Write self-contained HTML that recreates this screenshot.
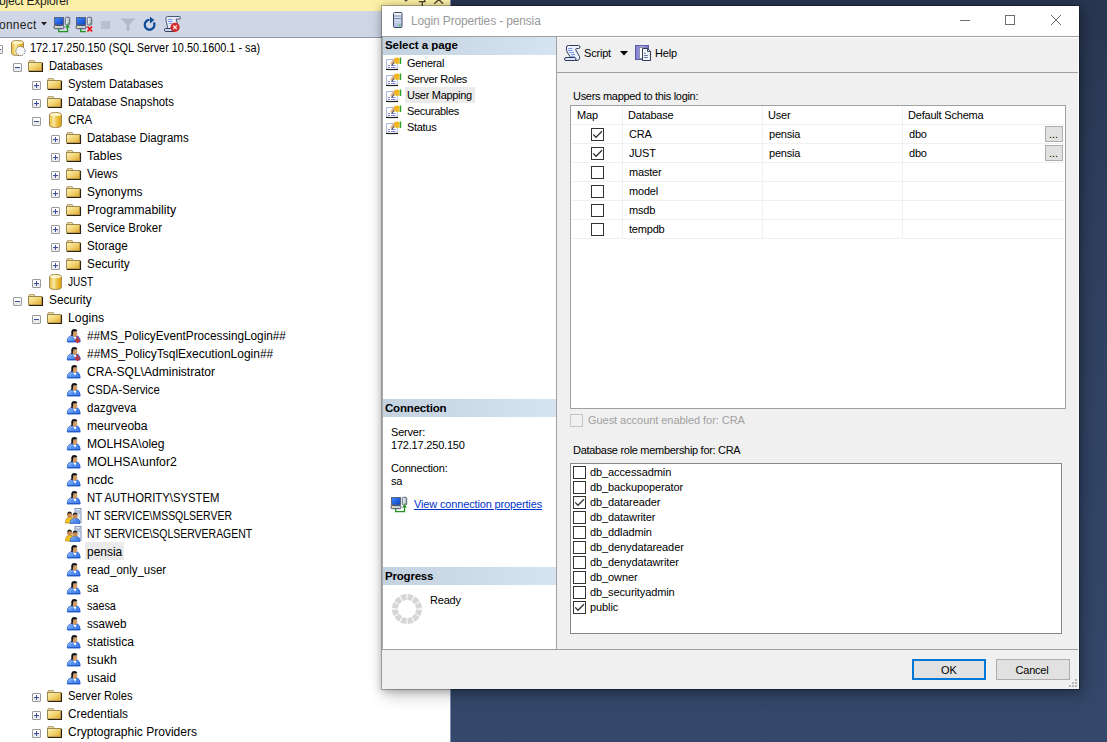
<!DOCTYPE html>
<html><head><meta charset="utf-8">
<style>
*{margin:0;padding:0;box-sizing:border-box}
html,body{width:1107px;height:742px;overflow:hidden}
body{position:relative;font-family:"Liberation Sans",sans-serif;background:linear-gradient(#293651 0%,#2f405f 35%,#34486b 100%);color:#000}
.abs{position:absolute}
#oe{position:absolute;left:0;top:0;width:450px;height:742px;background:#fff;overflow:hidden}
#oe-title{position:absolute;left:0;top:0;width:450px;height:11px;background:#fdf0a6;overflow:hidden}
#oe-tb{position:absolute;left:0;top:11px;width:450px;height:26px;background:#cfd6e5}
#oe-tbline{position:absolute;left:0;top:37px;width:450px;height:1px;background:#8e98ad}
#oe-edge{position:absolute;left:450px;top:0;width:1px;height:742px;background:#7d8fb8}
.tt{position:absolute;height:18px;line-height:18px;font-size:12px;white-space:nowrap;color:#000}
.tt span{display:inline-block;transform-origin:0 0;position:relative;top:1px}
.tt.hl{background:#ebebeb;padding:0 2px;margin-left:-2px}
.exp{position:absolute;width:9px;height:9px;border:1px solid #9b9b9b;border-radius:1px;background:linear-gradient(#fff 0%,#fff 45%,#e4e4e4 55%,#f0f0f0 100%)}
.exp .h{position:absolute;left:1px;top:3px;width:5px;height:1px;background:#3a4fa0}
.exp .v{position:absolute;left:3px;top:1px;width:1px;height:5px;background:#3a4fa0}
.ic{position:absolute;overflow:visible}
/* dialog */
#dlg{position:absolute;left:381px;top:5px;width:699px;height:685px;background:#f0f0f0;border:1px solid rgba(0,0,0,.25);background-clip:padding-box;box-shadow:0 1px 7px rgba(0,0,0,.22),3px 5px 15px rgba(0,0,0,.24)}
.d{position:absolute;font-size:11px;line-height:13px;white-space:nowrap;letter-spacing:-0.2px;color:#000}
.b{font-weight:bold;letter-spacing:-0.05px;font-size:11.5px}
.hdr{position:absolute;height:18px;background:linear-gradient(90deg,#c4d2e0,#d6e3f0)}
.cb{position:absolute;width:13px;height:13px;border:1px solid #333;background:#fff}
.gl{position:absolute;background:#f0f0f0}
</style></head>
<body>
<svg width="0" height="0" style="position:absolute">
<defs>
<linearGradient id="gfold" x1="0" y1="0" x2="1" y2="1"><stop offset="0" stop-color="#fdf3b8"/><stop offset="0.55" stop-color="#f0cf6a"/><stop offset="1" stop-color="#dfa12a"/></linearGradient>
<linearGradient id="gdb" x1="0" y1="0" x2="1" y2="0"><stop offset="0" stop-color="#e9b832"/><stop offset="0.35" stop-color="#f7e9a6"/><stop offset="0.6" stop-color="#eec24c"/><stop offset="1" stop-color="#dd9f08"/></linearGradient>
<linearGradient id="gblue" x1="0" y1="0" x2="1" y2="0.6"><stop offset="0" stop-color="#c4e2ff"/><stop offset="0.45" stop-color="#5d97f2"/><stop offset="1" stop-color="#3a78e6"/></linearGradient>
<symbol id="folder" viewBox="0 0 16 13">
 <path d="M0.8 2.8L1.3 0.6H6.2L7.2 2.8z" fill="#f3e3a6" stroke="#a89464" stroke-width="0.9"/>
 <rect x="0.5" y="2.5" width="13.5" height="8.5" fill="url(#gfold)" stroke="#9b8650" stroke-width="1"/>
 <path d="M14.5 3v8.5H1" stroke="#2c2410" stroke-width="1.1" fill="none"/>
</symbol>
<symbol id="db" viewBox="0 0 13 16">
 <path d="M0.5 2.5 Q0.5 0.5 6.5 0.5 Q12.5 0.5 12.5 2.5 V13.5 Q12.5 15.5 6.5 15.5 Q0.5 15.5 0.5 13.5z" fill="url(#gdb)" stroke="#a48b55" stroke-width="1"/>
 <ellipse cx="6.5" cy="2.6" rx="5.5" ry="1.6" fill="#fdf6c8"/>
</symbol>
<symbol id="server" viewBox="0 0 16 17">
 <path d="M0.5 2.5 Q0.5 0.5 6.5 0.5 Q12.5 0.5 12.5 2.5 V13.5 Q12.5 15.5 6.5 15.5 Q0.5 15.5 0.5 13.5z" fill="url(#gdb)" stroke="#a48b55" stroke-width="1"/>
 <ellipse cx="6.5" cy="2.6" rx="5.5" ry="1.6" fill="#fdf6c8"/>
 <circle cx="9.5" cy="11" r="4.6" fill="#f7f7f7" stroke="#555" stroke-width="0.9" stroke-dasharray="1.2 1"/>
</symbol>
<symbol id="user" viewBox="0 0 16 16">
 <path d="M1.2 14 Q1 9 4.5 7.8 L11 7.8 Q14.3 9 14.2 14z" fill="url(#gblue)" stroke="#2d63d2" stroke-width="0.8"/>
 <path d="M2 13.6h12" stroke="#1f56c8" stroke-width="1"/>
 <path d="M7 8.5 L9.3 11.8 L10.3 9z" fill="#fff"/>
 <ellipse cx="8.7" cy="5.8" rx="2.6" ry="2.9" fill="#d19b68"/>
 <path d="M5.3 8 L5.3 3.2 Q5.8 1 8.5 1 Q11.2 1 11.3 3.6 Q9.6 2.8 7.3 3.6 L6.6 8.2z" fill="#111"/>
</symbol>
<symbol id="redarrow" viewBox="0 0 16 16">
 <path d="M10.5 8.5h2v3h2.5l-3.5 4-3.5-4h2.5z" fill="#c83232"/>
</symbol>
<symbol id="service" viewBox="0 0 17 16">
 <rect x="10" y="0.5" width="6" height="14" fill="#dfe6f3" stroke="#6a7fa8" stroke-width="0.8"/>
 <path d="M11 3h4M11 5h4" stroke="#7a8fb8" stroke-width="0.8"/>
 <path d="M0.5 15 Q0.5 10 3.5 9.5 L7 9.5 Q9 10 9 15z" fill="#f2c21a" stroke="#b8860b" stroke-width="0.7"/>
 <circle cx="4.5" cy="7" r="2.5" fill="#c98b55"/>
 <path d="M2 6.5 Q2.5 3.5 4.6 3.5 Q7 3.5 7 6 Q5.5 5 3.5 5.5z" fill="#1c1c1c"/>
 <path d="M5 15.5 Q5 11 8.5 10.5 L12 10.5 Q15 11 15 15.5z" fill="url(#gblue)" stroke="#2a5fc0" stroke-width="0.7"/>
 <circle cx="10" cy="8" r="2.6" fill="#c98b55"/>
 <path d="M7.5 7.5 Q8 4.5 10.1 4.5 Q12.5 4.5 12.5 7 Q11 6 9 6.5z" fill="#1c1c1c"/>
</symbol>
<symbol id="pageic" viewBox="0 0 16 16">
 <path d="M0.5 13.5V3.5h11v10" fill="#fff" stroke="#b4b4e8" stroke-width="1"/>
 <path d="M11 4v9.5" stroke="#cfe8f8" stroke-width="1"/>
 <path d="M0 13.5h12" stroke="#1e1e1e" stroke-width="1.2"/>
 <path d="M2 9.5h2M5 9.5h4.5M2 11.5h2M5 11.5h4.5" stroke="#7f7fd6" stroke-width="1"/>
 <path d="M4 7.5l3-4 2 0 -2.5 5z" fill="#e0a878" opacity="0.8"/>
 <path d="M6 9l4-5" stroke="#33332a" stroke-width="1.6" stroke-dasharray="1 0.6"/>
 <path d="M8 2.5q2-1.5 5.5-0.5v5.5q-3 1-5-0.5z" fill="#f5b820"/>
 <path d="M14.5 1.5v6.5" stroke="#27a027" stroke-width="1.4"/>
</symbol>
<symbol id="connic" viewBox="0 0 17 16">
 <rect x="0.5" y="1.5" width="10" height="8" fill="#2f7de0" stroke="#4a5a78" stroke-width="0.9"/>
 <rect x="2" y="3" width="7" height="5" fill="#5db0ff"/>
 <rect x="0.5" y="10" width="10" height="3" rx="1" fill="#cfd8e8" stroke="#4a5a78" stroke-width="0.8"/>
 <rect x="12" y="0.5" width="4" height="10" rx="1" fill="#e8eef8" stroke="#4a5a78" stroke-width="0.8"/>
 <path d="M5 13v2.5h9v-4" stroke="#1f9a1f" stroke-width="1.3" fill="none"/>
 <path d="M12 12l2-2.5 2 2.5z" fill="#1f9a1f"/>
</symbol>
</defs>
</svg>

<div id="oe">
 <div id="oe-title">
  <div class="abs" style="left:-1px;top:-5px;font-size:12px;line-height:13px;color:#1e1e1e;white-space:nowrap;letter-spacing:-0.2px">bject Explorer</div>
  <svg class="abs" style="left:400px;top:-4px" width="50" height="15"><path d="M3.5 3.5h5l-2.5 2.2z" fill="#4a4430"/><path d="M22.3 5v5M18.8 5.6h7M20 0.5h4.6v5" stroke="#4a4430" stroke-width="1.3" fill="none"/><path d="M34.3 -0.5l8.8 8.2M43.1 -0.5l-8.8 8.2" stroke="#4a4430" stroke-width="1.4"/></svg>
 </div>
 <div id="oe-tb">
  <div class="abs" style="left:-1px;top:7px;font-size:12px;line-height:14px;color:#1e1e1e;letter-spacing:0.25px">onnect</div>
  <svg class="abs" style="left:41px;top:11px" width="6" height="4"><path d="M0 0h6l-3 3.5z" fill="#1e1e1e"/></svg>
  <svg class="abs" style="left:50px;top:1px" width="46" height="24">
   <defs><linearGradient id="gscr" x1="0" y1="0" x2="1" y2="1"><stop offset="0" stop-color="#3f8cff"/><stop offset="1" stop-color="#0b3fc4"/></linearGradient>
   <linearGradient id="gtow" x1="0" y1="0" x2="1" y2="0"><stop offset="0" stop-color="#f4f6fa"/><stop offset="1" stop-color="#a9b3c6"/></linearGradient></defs>
   <g id="mon">
    <rect x="4.5" y="5.5" width="9" height="7.5" fill="url(#gscr)" stroke="#5a6478" stroke-width="1"/>
    <rect x="4" y="13.5" width="10" height="3.2" rx="1.2" fill="#c6cfdc" stroke="#3e4658" stroke-width="0.9"/>
    <rect x="5" y="14.4" width="2.5" height="1.2" fill="#e9f08a"/>
    <rect x="15.3" y="5.3" width="4.4" height="7.6" rx="1" fill="url(#gtow)" stroke="#4e586c" stroke-width="0.9"/>
    <rect x="17.6" y="11" width="1.2" height="1.2" fill="#3cb030"/>
   </g>
   <path d="M8.7 17v2.6h8.8v-5" stroke="#1f941f" stroke-width="1.3" fill="none"/>
   <path d="M15 15.5l2.5-3 2.5 3z" fill="#1f941f"/>
   <use href="#mon" x="22"/>
   <path d="M30.7 17v2.6h5" stroke="#1f941f" stroke-width="1.3" fill="none"/>
   <path d="M37.5 14.5l4.5 5M42 14.5l-4.5 5" stroke="#f01010" stroke-width="1.8"/>
  </svg>
  <div class="abs" style="left:101px;top:10px;width:9px;height:8px;background:#b9bfcb"></div>
  <svg class="abs" style="left:120px;top:7px" width="16" height="13"><path d="M0.5 0.5h15l-6 6v6h-3v-6z" fill="#b3b9c6"/></svg>
  <svg class="abs" style="left:138px;top:1px" width="46" height="24">
   <path d="M15.9 10.5A4.9 4.9 0 1 1 11.5 7.9" stroke="#0c4a98" stroke-width="2.3" fill="none"/>
   <path d="M12 4.8l4.3 3.2-4.3 3.4z" fill="#0c4a98"/>
   <path d="M31 4.5h10q1.5 0 1.5 1.3t-1.5 1.3h-3l0 0L41 17H30l-1.5-6.5q-0.5-1.5-0.5-3V6q0-1.5 1.5-1.5z" fill="#e6ecf8" stroke="#3a4766" stroke-width="0.9"/>
   <path d="M26.5 17.5q0-1 1-1h9v3h-9q-1 0-1-2z" fill="#cbd7f0" stroke="#24304c" stroke-width="0.9"/>
   <path d="M30 7.5h4.5M30 9.5h4.5M31 11.5h3" stroke="#6e8fe0" stroke-width="0.9"/>
   <circle cx="37" cy="15.3" r="4.6" fill="#d42a2a"/>
   <path d="M35.2 13.5l3.6 3.6M38.8 13.5l-3.6 3.6" stroke="#fbeaea" stroke-width="1.3"/>
  </svg>
 </div>
 <div id="oe-tbline"></div>
<div class="exp" style="left:-6px;top:45px"><i class="h"></i></div>
<svg class="ic" style="left:11px;top:40px" width="16" height="17"><use href="#server"/></svg>
<div class="tt" style="left:30px;top:38px"><span style="transform:scaleX(0.9072)">172.17.250.150 (SQL Server 10.50.1600.1 - sa)</span></div>
<div class="exp" style="left:13px;top:63px"><i class="h"></i></div>
<svg class="ic" style="left:28px;top:60px" width="16" height="13"><use href="#folder"/></svg>
<div class="tt" style="left:49px;top:56px"><span style="transform:scaleX(0.9359)">Databases</span></div>
<div class="exp" style="left:32px;top:81px"><i class="h"></i><i class=v></i></div>
<svg class="ic" style="left:47px;top:78px" width="16" height="13"><use href="#folder"/></svg>
<div class="tt" style="left:68px;top:74px"><span style="transform:scaleX(0.9452)">System Databases</span></div>
<div class="exp" style="left:32px;top:99px"><i class="h"></i><i class=v></i></div>
<svg class="ic" style="left:47px;top:96px" width="16" height="13"><use href="#folder"/></svg>
<div class="tt" style="left:68px;top:92px"><span style="transform:scaleX(0.9513)">Database Snapshots</span></div>
<div class="exp" style="left:32px;top:117px"><i class="h"></i></div>
<svg class="ic" style="left:49px;top:112px" width="13" height="16"><use href="#db"/></svg>
<div class="tt" style="left:68px;top:110px"><span style="transform:scaleX(0.9549)">CRA</span></div>
<div class="exp" style="left:51px;top:135px"><i class="h"></i><i class=v></i></div>
<svg class="ic" style="left:66px;top:132px" width="16" height="13"><use href="#folder"/></svg>
<div class="tt" style="left:87px;top:128px"><span style="transform:scaleX(0.9589)">Database Diagrams</span></div>
<div class="exp" style="left:51px;top:153px"><i class="h"></i><i class=v></i></div>
<svg class="ic" style="left:66px;top:150px" width="16" height="13"><use href="#folder"/></svg>
<div class="tt" style="left:87px;top:146px"><span style="transform:scaleX(1.0148)">Tables</span></div>
<div class="exp" style="left:51px;top:171px"><i class="h"></i><i class=v></i></div>
<svg class="ic" style="left:66px;top:168px" width="16" height="13"><use href="#folder"/></svg>
<div class="tt" style="left:87px;top:164px"><span style="transform:scaleX(0.9655)">Views</span></div>
<div class="exp" style="left:51px;top:189px"><i class="h"></i><i class=v></i></div>
<svg class="ic" style="left:66px;top:186px" width="16" height="13"><use href="#folder"/></svg>
<div class="tt" style="left:87px;top:182px"><span style="transform:scaleX(0.9905)">Synonyms</span></div>
<div class="exp" style="left:51px;top:207px"><i class="h"></i><i class=v></i></div>
<svg class="ic" style="left:66px;top:204px" width="16" height="13"><use href="#folder"/></svg>
<div class="tt" style="left:87px;top:200px"><span style="transform:scaleX(1.0288)">Programmability</span></div>
<div class="exp" style="left:51px;top:225px"><i class="h"></i><i class=v></i></div>
<svg class="ic" style="left:66px;top:222px" width="16" height="13"><use href="#folder"/></svg>
<div class="tt" style="left:87px;top:218px"><span style="transform:scaleX(0.9529)">Service Broker</span></div>
<div class="exp" style="left:51px;top:243px"><i class="h"></i><i class=v></i></div>
<svg class="ic" style="left:66px;top:240px" width="16" height="13"><use href="#folder"/></svg>
<div class="tt" style="left:87px;top:236px"><span style="transform:scaleX(0.9707)">Storage</span></div>
<div class="exp" style="left:51px;top:261px"><i class="h"></i><i class=v></i></div>
<svg class="ic" style="left:66px;top:258px" width="16" height="13"><use href="#folder"/></svg>
<div class="tt" style="left:87px;top:254px"><span style="transform:scaleX(0.9848)">Security</span></div>
<div class="exp" style="left:32px;top:279px"><i class="h"></i><i class=v></i></div>
<svg class="ic" style="left:49px;top:274px" width="13" height="16"><use href="#db"/></svg>
<div class="tt" style="left:68px;top:272px"><span style="transform:scaleX(0.8400)">JUST</span></div>
<div class="exp" style="left:13px;top:297px"><i class="h"></i></div>
<svg class="ic" style="left:28px;top:294px" width="16" height="13"><use href="#folder"/></svg>
<div class="tt" style="left:49px;top:290px"><span style="transform:scaleX(0.9848)">Security</span></div>
<div class="exp" style="left:32px;top:315px"><i class="h"></i></div>
<svg class="ic" style="left:47px;top:312px" width="16" height="13"><use href="#folder"/></svg>
<div class="tt" style="left:68px;top:308px"><span style="transform:scaleX(1.0233)">Logins</span></div>
<svg class="ic" style="left:66px;top:328px" width="16" height="16"><use href="#user"/><use href="#redarrow"/></svg>
<div class="tt" style="left:87px;top:326px"><span style="transform:scaleX(0.9808)">##MS_PolicyEventProcessingLogin##</span></div>
<svg class="ic" style="left:66px;top:346px" width="16" height="16"><use href="#user"/><use href="#redarrow"/></svg>
<div class="tt" style="left:87px;top:344px"><span style="transform:scaleX(0.9969)">##MS_PolicyTsqlExecutionLogin##</span></div>
<svg class="ic" style="left:66px;top:364px" width="16" height="16"><use href="#user"/></svg>
<div class="tt" style="left:87px;top:362px"><span style="transform:scaleX(1.0049)">CRA-SQL\Administrator</span></div>
<svg class="ic" style="left:66px;top:382px" width="16" height="16"><use href="#user"/></svg>
<div class="tt" style="left:87px;top:380px"><span style="transform:scaleX(0.9411)">CSDA-Service</span></div>
<svg class="ic" style="left:66px;top:400px" width="16" height="16"><use href="#user"/></svg>
<div class="tt" style="left:87px;top:398px"><span style="transform:scaleX(0.9635)">dazgveva</span></div>
<svg class="ic" style="left:66px;top:418px" width="16" height="16"><use href="#user"/></svg>
<div class="tt" style="left:87px;top:416px"><span style="transform:scaleX(1.0092)">meurveoba</span></div>
<svg class="ic" style="left:66px;top:436px" width="16" height="16"><use href="#user"/></svg>
<div class="tt" style="left:87px;top:434px"><span style="transform:scaleX(1.0117)">MOLHSA\oleg</span></div>
<svg class="ic" style="left:66px;top:454px" width="16" height="16"><use href="#user"/></svg>
<div class="tt" style="left:87px;top:452px"><span style="transform:scaleX(1.0199)">MOLHSA\unfor2</span></div>
<svg class="ic" style="left:66px;top:472px" width="16" height="16"><use href="#user"/></svg>
<div class="tt" style="left:87px;top:470px"><span style="transform:scaleX(1.0529)">ncdc</span></div>
<svg class="ic" style="left:66px;top:490px" width="16" height="16"><use href="#user"/></svg>
<div class="tt" style="left:87px;top:488px"><span style="transform:scaleX(0.9426)">NT AUTHORITY\SYSTEM</span></div>
<svg class="ic" style="left:65px;top:508px" width="17" height="16"><use href="#service"/></svg>
<div class="tt" style="left:87px;top:506px"><span style="transform:scaleX(0.8732)">NT SERVICE\MSSQLSERVER</span></div>
<svg class="ic" style="left:65px;top:526px" width="17" height="16"><use href="#service"/></svg>
<div class="tt" style="left:87px;top:524px"><span style="transform:scaleX(0.8722)">NT SERVICE\SQLSERVERAGENT</span></div>
<svg class="ic" style="left:66px;top:544px" width="16" height="16"><use href="#user"/></svg>
<div class="tt hl" style="left:87px;top:542px"><span style="transform:scaleX(0.9951)">pensia</span></div>
<svg class="ic" style="left:66px;top:562px" width="16" height="16"><use href="#user"/></svg>
<div class="tt" style="left:87px;top:560px"><span style="transform:scaleX(0.9573)">read_only_user</span></div>
<svg class="ic" style="left:66px;top:580px" width="16" height="16"><use href="#user"/></svg>
<div class="tt" style="left:87px;top:578px"><span style="transform:scaleX(0.8985)">sa</span></div>
<svg class="ic" style="left:66px;top:598px" width="16" height="16"><use href="#user"/></svg>
<div class="tt" style="left:87px;top:596px"><span style="transform:scaleX(0.9022)">saesa</span></div>
<svg class="ic" style="left:66px;top:616px" width="16" height="16"><use href="#user"/></svg>
<div class="tt" style="left:87px;top:614px"><span style="transform:scaleX(0.9684)">ssaweb</span></div>
<svg class="ic" style="left:66px;top:634px" width="16" height="16"><use href="#user"/></svg>
<div class="tt" style="left:87px;top:632px"><span style="transform:scaleX(1.0067)">statistica</span></div>
<svg class="ic" style="left:66px;top:652px" width="16" height="16"><use href="#user"/></svg>
<div class="tt" style="left:87px;top:650px"><span style="transform:scaleX(1.0423)">tsukh</span></div>
<svg class="ic" style="left:66px;top:670px" width="16" height="16"><use href="#user"/></svg>
<div class="tt" style="left:87px;top:668px"><span style="transform:scaleX(1.0074)">usaid</span></div>
<div class="exp" style="left:32px;top:693px"><i class="h"></i><i class=v></i></div>
<svg class="ic" style="left:47px;top:690px" width="16" height="13"><use href="#folder"/></svg>
<div class="tt" style="left:68px;top:686px"><span style="transform:scaleX(0.9299)">Server Roles</span></div>
<div class="exp" style="left:32px;top:711px"><i class="h"></i><i class=v></i></div>
<svg class="ic" style="left:47px;top:708px" width="16" height="13"><use href="#folder"/></svg>
<div class="tt" style="left:68px;top:704px"><span style="transform:scaleX(0.9884)">Credentials</span></div>
<div class="exp" style="left:32px;top:729px"><i class="h"></i><i class=v></i></div>
<svg class="ic" style="left:47px;top:726px" width="16" height="13"><use href="#folder"/></svg>
<div class="tt" style="left:68px;top:722px"><span style="transform:scaleX(1.0022)">Cryptographic Providers</span></div>
</div>
<div id="oe-edge"></div>

<div id="dlg"></div>
<div class="abs" style="left:382px;top:6px;width:697px;height:30px;background:#fff"></div>
<div class="abs" style="left:382px;top:36px;width:697px;height:1px;background:#a0a0a0"></div>
<svg class="abs" style="left:393px;top:12px" width="10" height="16"><defs><linearGradient id="gsv" x1="0" y1="0" x2="0" y2="1"><stop offset="0" stop-color="#f4f7fc"/><stop offset="1" stop-color="#a9b8dc"/></linearGradient></defs><rect x="0.5" y="0.5" width="8.5" height="15" rx="1" fill="url(#gsv)" stroke="#3f4a66" stroke-width="1"/><path d="M1 4h7.5M1 6.5h7.5" stroke="#6f7da0" stroke-width="0.9"/><rect x="6" y="12.5" width="1.5" height="1.5" fill="#33cc33"/></svg>
<div class="abs" style="left:411px;top:12px;font-size:12px;line-height:18px;color:#999;white-space:nowrap;letter-spacing:-0.15px">Login Properties - pensia</div>
<svg class="abs" style="left:955px;top:10px" width="112" height="20"><path d="M5 10.5h10" stroke="#6e6e6e" stroke-width="1"/><rect x="50.5" y="5.5" width="9" height="9" fill="none" stroke="#6e6e6e" stroke-width="1"/><path d="M96 5l10 10M106 5l-10 10" stroke="#6e6e6e" stroke-width="1"/></svg>
<div class="abs" style="left:382px;top:37px;width:174px;height:613px;background:#fff"></div>
<div class="abs" style="left:382px;top:37px;width:1px;height:613px;background:#a6a7ab;z-index:2"></div>
<div class="abs" style="left:556px;top:37px;width:1px;height:613px;background:#a0a0a0"></div>
<div class="hdr" style="left:382px;top:37px;width:174px"></div>
<div class="d b" style="left:385px;top:39px">Select a page</div>
<svg class="abs" style="left:386px;top:56px" width="16" height="16"><use href="#pageic"/></svg>
<div class="d" style="left:407px;top:57px;letter-spacing:-0.3px">General</div>
<svg class="abs" style="left:386px;top:72px" width="16" height="16"><use href="#pageic"/></svg>
<div class="d" style="left:407px;top:73px;letter-spacing:-0.3px">Server Roles</div>
<div class="abs" style="left:405px;top:87px;width:70px;height:16px;background:#ebebeb"></div>
<svg class="abs" style="left:386px;top:88px" width="16" height="16"><use href="#pageic"/></svg>
<div class="d" style="left:407px;top:89px;letter-spacing:-0.3px">User Mapping</div>
<svg class="abs" style="left:386px;top:104px" width="16" height="16"><use href="#pageic"/></svg>
<div class="d" style="left:407px;top:105px;letter-spacing:-0.3px">Securables</div>
<svg class="abs" style="left:386px;top:120px" width="16" height="16"><use href="#pageic"/></svg>
<div class="d" style="left:407px;top:121px;letter-spacing:-0.3px">Status</div>
<div class="hdr" style="left:382px;top:399px;width:174px"></div>
<div class="d b" style="left:385px;top:402px;letter-spacing:-0.18px">Connection</div>
<div class="d" style="left:391px;top:426px">Server:</div>
<div class="d" style="left:391px;top:439px">172.17.250.150</div>
<div class="d" style="left:391px;top:462px">Connection:</div>
<div class="d" style="left:391px;top:475px">sa</div>
<svg class="abs" style="left:387px;top:492px" width="24" height="24"><use href="#mon"/><path d="M8.7 17v2.6h8.8v-5" stroke="#1f941f" stroke-width="1.3" fill="none"/><path d="M15 15.5l2.5-3 2.5 3z" fill="#1f941f"/></svg>
<div class="d" style="left:414px;top:498px;color:#0033cc;text-decoration:underline;letter-spacing:-0.15px">View connection properties</div>
<div class="hdr" style="left:382px;top:567px;width:174px"></div>
<div class="d b" style="left:385px;top:570px;letter-spacing:-0.2px">Progress</div>
<svg class="abs" style="left:392px;top:594px" width="30" height="30"><g stroke="#d6d6d6" stroke-width="6" fill="none"><path d="M26.99 15.56 A12 12 0 0 1 25.66 20.51" /><path d="M25.10 21.48 A12 12 0 0 1 21.48 25.10" /><path d="M20.51 25.66 A12 12 0 0 1 15.56 26.99" /><path d="M14.44 26.99 A12 12 0 0 1 9.49 25.66" /><path d="M8.52 25.10 A12 12 0 0 1 4.90 21.48" /><path d="M4.34 20.51 A12 12 0 0 1 3.01 15.56" /><path d="M3.01 14.44 A12 12 0 0 1 4.34 9.49" /><path d="M4.90 8.52 A12 12 0 0 1 8.52 4.90" /><path d="M9.49 4.34 A12 12 0 0 1 14.44 3.01" /><path d="M15.56 3.01 A12 12 0 0 1 20.51 4.34" /><path d="M21.48 4.90 A12 12 0 0 1 25.10 8.52" /><path d="M25.66 9.49 A12 12 0 0 1 26.99 14.44" /></g></svg>
<div class="d" style="left:430px;top:594px">Ready</div>
<div class="abs" style="left:557px;top:37px;width:521px;height:1px;background:#fff"></div>
<div class="abs" style="left:557px;top:72px;width:521px;height:1px;background:#a0a0a0"></div>
<svg class="abs" style="left:561px;top:42px" width="22" height="22"><path d="M7.5 3.5H17.5Q19 3.5 19 5Q19 6.5 17.5 6.5H15.5Q14.5 6.5 14.8 8L18.5 14.5Q19.2 16.5 17.5 18.2L15 18.5H9V14.5L6 10Q5.5 9 5.5 7V5Q5.5 3.5 7.5 3.5z" fill="#eef2fc" stroke="#2e3a58" stroke-width="1"/><rect x="3.5" y="15.5" width="11.5" height="3" rx="1.5" fill="#dde6fa" stroke="#2e3a58" stroke-width="1"/><path d="M7 6.5h4.5M7 8.5h4.5M8 10.5h5M10 12.5h4M10 14.3h4" stroke="#6e8fe0" stroke-width="0.9"/></svg>
<div class="d" style="left:584px;top:47px">Script</div>
<svg class="abs" style="left:620px;top:51px" width="9" height="5"><path d="M0 0h8l-4 4.5z" fill="#000"/></svg>
<svg class="abs" style="left:632px;top:42px" width="22" height="22"><defs><linearGradient id="gbk" x1="0" y1="0" x2="1" y2="0"><stop offset="0" stop-color="#7a78c8"/><stop offset="0.5" stop-color="#b4b4f4"/><stop offset="1" stop-color="#6f6fc0"/></linearGradient></defs><rect x="3.5" y="3.5" width="13" height="14" fill="url(#gbk)" stroke="#5e5aa8" stroke-width="1"/><rect x="7.5" y="5.5" width="6" height="11" fill="#fff" stroke="#7a8098" stroke-width="0.8"/><path d="M10.5 6.5H15.5L18.5 9.5V18.5H10.5z" fill="#f2f5fb" stroke="#2e3a58" stroke-width="1"/><path d="M15.5 6.5V9.5H18.5" fill="none" stroke="#2e3a58" stroke-width="0.9"/><path d="M12 11.3h2M12 13.5h4M12 15.5h4" stroke="#5a6a90" stroke-width="0.9"/></svg>
<div class="d" style="left:655px;top:47px">Help</div>
<div class="d" style="left:573px;top:90px;letter-spacing:-0.3px">Users mapped to this login:</div>
<div class="abs" style="left:570px;top:105px;width:496px;height:304px;background:#fff;border:1px solid #a0a0a0"></div>
<div class="gl" style="left:571px;top:124px;width:493px;height:1px"></div>
<div class="gl" style="left:571px;top:143px;width:493px;height:1px"></div>
<div class="gl" style="left:571px;top:162px;width:493px;height:1px"></div>
<div class="gl" style="left:571px;top:181px;width:493px;height:1px"></div>
<div class="gl" style="left:571px;top:200px;width:493px;height:1px"></div>
<div class="gl" style="left:571px;top:219px;width:493px;height:1px"></div>
<div class="gl" style="left:571px;top:238px;width:493px;height:1px"></div>
<div class="gl" style="left:622px;top:106px;width:1px;height:133px"></div>
<div class="gl" style="left:762px;top:106px;width:1px;height:133px"></div>
<div class="gl" style="left:902px;top:106px;width:1px;height:133px"></div>
<div class="d" style="left:577px;top:109px">Map</div>
<div class="d" style="left:628px;top:109px">Database</div>
<div class="d" style="left:768px;top:109px">User</div>
<div class="d" style="left:908px;top:109px">Default Schema</div>
<div class="cb" style="left:591px;top:128px"></div><svg class="abs" style="left:591px;top:128px" width="13" height="13"><path d="M2.2 6.4 L5 9.3 L11 3.2" stroke="#333" stroke-width="1.3" fill="none"/></svg>
<div class="d" style="left:629px;top:128px">CRA</div>
<div class="d" style="left:769px;top:128px">pensia</div>
<div class="d" style="left:909px;top:128px">dbo</div>
<div class="abs" style="left:1045px;top:126px;width:18px;height:16px;background:#e1e1e1;border:1px solid #adadad"></div>
<div class="d" style="left:1049px;top:128px;letter-spacing:0">...</div>
<div class="cb" style="left:591px;top:147px"></div><svg class="abs" style="left:591px;top:147px" width="13" height="13"><path d="M2.2 6.4 L5 9.3 L11 3.2" stroke="#333" stroke-width="1.3" fill="none"/></svg>
<div class="d" style="left:629px;top:147px">JUST</div>
<div class="d" style="left:769px;top:147px">pensia</div>
<div class="d" style="left:909px;top:147px">dbo</div>
<div class="abs" style="left:1045px;top:145px;width:18px;height:16px;background:#e1e1e1;border:1px solid #adadad"></div>
<div class="d" style="left:1049px;top:147px;letter-spacing:0">...</div>
<div class="cb" style="left:591px;top:166px"></div>
<div class="d" style="left:629px;top:166px">master</div>
<div class="cb" style="left:591px;top:185px"></div>
<div class="d" style="left:629px;top:185px">model</div>
<div class="cb" style="left:591px;top:204px"></div>
<div class="d" style="left:629px;top:204px">msdb</div>
<div class="cb" style="left:591px;top:223px"></div>
<div class="d" style="left:629px;top:223px">tempdb</div>
<div class="abs" style="left:570px;top:414px;width:13px;height:13px;border:1px solid #c6c6c6;background:#f0f0f0"></div>
<div class="d" style="left:588px;top:414px;color:#a0a0a0;letter-spacing:-0.05px">Guest account enabled for: CRA</div>
<div class="d" style="left:573px;top:444px;letter-spacing:-0.3px">Database role membership for: CRA</div>
<div class="abs" style="left:570px;top:463px;width:492px;height:171px;background:#fff;border:1px solid #828790"></div>
<div class="cb" style="left:573px;top:466px"></div>
<div class="d" style="left:590px;top:466px;letter-spacing:-0.1px">db_accessadmin</div>
<div class="cb" style="left:573px;top:481px"></div>
<div class="d" style="left:590px;top:481px;letter-spacing:-0.1px">db_backupoperator</div>
<div class="cb" style="left:573px;top:496px"></div><svg class="abs" style="left:573px;top:496px" width="13" height="13"><path d="M2.2 6.4 L5 9.3 L11 3.2" stroke="#333" stroke-width="1.3" fill="none"/></svg>
<div class="d" style="left:590px;top:496px;letter-spacing:-0.1px">db_datareader</div>
<div class="cb" style="left:573px;top:511px"></div>
<div class="d" style="left:590px;top:511px;letter-spacing:-0.1px">db_datawriter</div>
<div class="cb" style="left:573px;top:526px"></div>
<div class="d" style="left:590px;top:526px;letter-spacing:-0.1px">db_ddladmin</div>
<div class="cb" style="left:573px;top:541px"></div>
<div class="d" style="left:590px;top:541px;letter-spacing:-0.1px">db_denydatareader</div>
<div class="cb" style="left:573px;top:556px"></div>
<div class="d" style="left:590px;top:556px;letter-spacing:-0.1px">db_denydatawriter</div>
<div class="cb" style="left:573px;top:571px"></div>
<div class="d" style="left:590px;top:571px;letter-spacing:-0.1px">db_owner</div>
<div class="cb" style="left:573px;top:586px"></div>
<div class="d" style="left:590px;top:586px;letter-spacing:-0.1px">db_securityadmin</div>
<div class="cb" style="left:573px;top:601px"></div><svg class="abs" style="left:573px;top:601px" width="13" height="13"><path d="M2.2 6.4 L5 9.3 L11 3.2" stroke="#333" stroke-width="1.3" fill="none"/></svg>
<div class="d" style="left:590px;top:601px;letter-spacing:-0.1px">public</div>
<div class="abs" style="left:382px;top:649px;width:697px;height:1px;background:#a0a0a0"></div>
<div class="abs" style="left:1078px;top:37px;width:1px;height:652px;background:#fafafa"></div>
<div class="abs" style="left:912px;top:659px;width:74px;height:21px;background:#e1e1e1;border:2px solid #0078d7"></div>
<div class="d" style="left:912px;top:664px;width:74px;text-align:center;letter-spacing:0">OK</div>
<div class="abs" style="left:996px;top:659px;width:74px;height:21px;background:#e1e1e1;border:1px solid #adadad"></div>
<div class="d" style="left:995px;top:664px;width:74px;text-align:center;letter-spacing:-0.2px">Cancel</div>
<svg class="abs" style="left:1068px;top:678px" width="10" height="10"><g fill="#b8b8b8"><rect x="7" y="1" width="2" height="2"/><rect x="4" y="4" width="2" height="2"/><rect x="7" y="4" width="2" height="2"/><rect x="1" y="7" width="2" height="2"/><rect x="4" y="7" width="2" height="2"/><rect x="7" y="7" width="2" height="2"/></g></svg>
</body></html>
